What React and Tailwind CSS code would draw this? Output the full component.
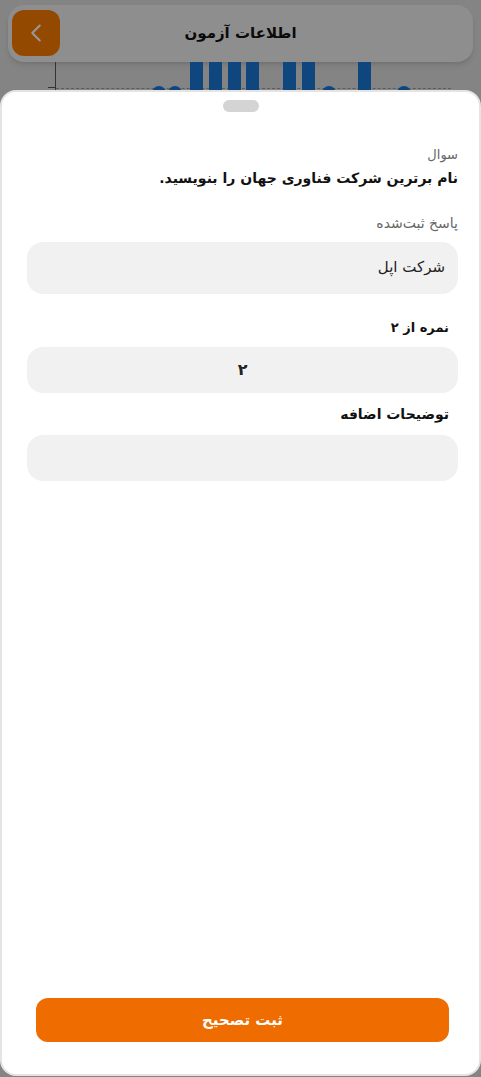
import React, { useState } from 'react'
import { ChevronLeft } from 'lucide-react'

const font = { fontFamily: '"DejaVu Sans", "Noto Sans", sans-serif' }

// bars of the score chart behind the sheet: [left, top]
const bars = [
  [190, 62], [209, 62], [228, 62], [246, 62],
  [283, 62], [302, 62], [358, 62],
]
const bumps = [152, 168, 322, 397]

function ExamPage() {
  return (
    <div className="h-full bg-[#dcdcdc]">
      <div className="px-2 pt-[5px]">
        <div className="relative flex h-[57px] items-center justify-center rounded-2xl bg-[#ededed] shadow-md">
          <button className="absolute left-1 top-[5px] flex h-[46px] w-[48px] items-center justify-center rounded-xl bg-[#f57c00] text-white">
            <ChevronLeft size={30} strokeWidth={1.6} />
          </button>
          <span className="text-[15px] font-bold text-[#111]">اطلاعات آزمون</span>
        </div>
      </div>
      {/* chart peeking out above the sheet */}
      <div className="relative h-[40px]">
        <div className="absolute left-[55px] top-0 h-[34px] w-px bg-[#555]" />
        <div className="absolute left-[48px] top-[25px] h-px w-[8px] bg-[#555]" />
        <div className="absolute left-[56px] right-[30px] top-[26px] border-t border-dashed border-[#999]" />
        {bars.map(([x], i) => (
          <div key={i} className="absolute top-0 h-[40px] w-[13px] bg-[#1976d2]" style={{ left: x }} />
        ))}
        {bumps.map((x, i) => (
          <div key={i} className="absolute top-[24px] h-[16px] w-[14px] rounded-t-full bg-[#1976d2]" style={{ left: x }} />
        ))}
      </div>
    </div>
  )
}

function Field({ children, className }) {
  return <div className={`rounded-2xl bg-[#f1f1f1] ${className}`}>{children}</div>
}

export default function App() {
  const [note, setNote] = useState('')

  return (
    <div dir="rtl" className="relative h-[1077px] w-[481px] overflow-hidden" style={font}>
      <ExamPage />
      <div className="absolute inset-0 bg-black/40" />

      <div className="absolute inset-x-0 bottom-[1px] top-[90px] flex flex-col rounded-2xl border-2 border-[#e4e4e4] bg-white">
        <div className="flex justify-center pt-[8px]">
          <div className="h-[12px] w-[36px] rounded-md bg-[#d4d4d4]" />
        </div>

        <div className="flex flex-1 flex-col pl-[25px] pr-[21px] pt-[33px]">
          <div className="text-[13px] text-[#666]">سوال</div>
          <div className="mt-[3px] text-[14px] font-bold text-[#111]">نام برترین شرکت فناوری جهان را بنویسید.</div>

          <div className="mt-[24px] text-[14px] text-[#666]">پاسخ ثبت‌شده</div>
          <Field className="mt-[8px] flex h-[52px] items-center px-[13px] text-[15px] text-[#222]">
            شرکت اپل
          </Field>

          <div className="mt-[24px] pr-[9px] text-[13px] font-bold text-[#111]">نمره از ۲</div>
          <Field className="mt-[10px] flex h-[46px] items-center justify-center text-[16px] font-bold text-[#222]">
            ۲
          </Field>

          <div className="mt-[11px] pr-[9px] text-[14px] font-bold text-[#111]">توضیحات اضافه</div>
          <textarea
            value={note}
            onChange={(e) => setNote(e.target.value)}
            className="mt-[10px] h-[46px] resize-none rounded-2xl bg-[#f1f1f1] px-3 py-2 text-[14px] outline-none"
          />

          <div className="flex-1" />
          <button className="mx-[9px] mb-[32px] h-[44px] rounded-xl bg-[#ef6c00] text-[15px] font-bold text-white">
            ثبت تصحیح
          </button>
        </div>
      </div>
    </div>
  )
}
